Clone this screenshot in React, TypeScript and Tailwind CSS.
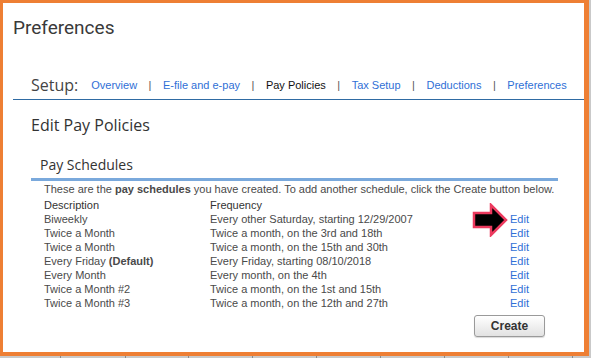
import React from 'react';

const links = [
  { label: 'Overview', active: false },
  { label: 'E-file and e-pay', active: false },
  { label: 'Pay Policies', active: true },
  { label: 'Tax Setup', active: false },
  { label: 'Deductions', active: false },
  { label: 'Preferences', active: false },
];

const schedules: { name: React.ReactNode; freq: string }[] = [
  { name: 'Biweekly', freq: 'Every other Saturday, starting 12/29/2007' },
  { name: 'Twice a Month', freq: 'Twice a month, on the 3rd and 18th' },
  { name: 'Twice a Month', freq: 'Twice a month, on the 15th and 30th' },
  {
    name: (
      <>
        Every Friday <span className="font-bold">(Default)</span>
      </>
    ),
    freq: 'Every Friday, starting 08/10/2018',
  },
  { name: 'Every Month', freq: 'Every month, on the 4th' },
  { name: 'Twice a Month #2', freq: 'Twice a month, on the 1st and 15th' },
  { name: 'Twice a Month #3', freq: 'Twice a month, on the 12th and 27th' },
];

function PointerArrow() {
  return (
    <svg width="36" height="34" viewBox="0 0 36 34" className="absolute left-[-38px] top-[-9px]">
      <path
        d="M2 10 L19 10 L19 2 L34 17 L19 32 L19 24 L2 24 Z"
        fill="#000"
        stroke="#ec3a5e"
        strokeWidth="2.5"
        strokeLinejoin="miter"
      />
    </svg>
  );
}

export default function App() {
  return (
    <div className="w-[591px] h-[358px] bg-[#c9c9c9] overflow-hidden relative">
      <div className="w-[589px] h-[356px] bg-white border-t-[3px] border-l-[3px] border-r-[5px] border-b-[4px] border-[#ee7f34] flex flex-col">
        <h1
          className="ml-[10px] mt-[11px] text-[19px] leading-[28px] text-[#3a3a3a]"
          style={{ fontFamily: 'Roboto, sans-serif' }}
        >
          Preferences
        </h1>

        <div className="ml-[10px] mt-[31px] border-b border-[#2f6ba3] pb-[2px]">
          <div className="flex items-center pl-[18px] h-[24px]">
            <span
              className="text-[16px] text-[#444] mr-[13px]"
              style={{ fontFamily: '"Open Sans", sans-serif' }}
            >
              Setup:
            </span>
            {links.map((l, i) => (
              <span
                key={l.label}
                className="flex items-center text-[11px]"
                style={{ fontFamily: '"Liberation Sans", Arial, sans-serif' }}
              >
                {i > 0 && <span className="text-[#555] mx-[11.5px]">|</span>}
                <span className={l.active ? 'text-[#111]' : 'text-[#2f6fd6]'}>{l.label}</span>
              </span>
            ))}
          </div>
        </div>

        <h2
          className="ml-[28px] mt-[13px] text-[16px] leading-[24px] text-[#333]"
          style={{ fontFamily: '"Open Sans", sans-serif' }}
        >
          Edit Pay Policies
        </h2>

        <div className="ml-[28px] mr-[26px] mt-[18px]">
          <div
            className="pl-[9px] text-[14px] leading-[20px] text-[#333] pb-[3px] border-b-[3px] border-[#7aa9dc]"
            style={{ fontFamily: '"Open Sans", sans-serif' }}
          >
            Pay Schedules
          </div>

          <div
            className="pl-[13px] text-[11px] leading-[14px] text-[#4a4a4a]"
            style={{ fontFamily: '"Liberation Sans", Arial, sans-serif' }}
          >
            <p className="mt-[1px]">
              These are the <span className="font-bold">pay schedules</span> you have created. To add another
              schedule, click the Create button below.
            </p>
            <div className="mt-[2px] flex text-[#333]">
              <span className="w-[166px]">Description</span>
              <span>Frequency</span>
            </div>
            {schedules.map((s, i) => (
              <div key={i} className="flex">
                <span className="w-[166px]">{s.name}</span>
                <span className="w-[300px]">{s.freq}</span>
                <span className="relative text-[#2f6fd6]">
                  {i === 0 && <PointerArrow />}
                  Edit
                </span>
              </div>
            ))}
            <div className="flex justify-end mt-[5px] pr-[13px]">
              <button
                className="w-[71px] h-[22px] rounded-[3px] border border-[#9a9a9a] bg-gradient-to-b from-white to-[#e2e2e2] text-[12px] font-bold text-[#333] shadow-[0_1px_1px_rgba(0,0,0,0.15)]"
                style={{ fontFamily: '"Liberation Sans", Arial, sans-serif' }}
              >
                Create
              </button>
            </div>
          </div>
        </div>
      </div>
      <div className="absolute left-0 bottom-0 w-[591px] h-[2px]">
        {[60, 125, 188, 252, 316, 380, 444, 508, 572].map((x) => (
          <div key={x} className="absolute top-0 w-px h-[2px] bg-[#8a8a8a]" style={{ left: x }} />
        ))}
      </div>
    </div>
  );
}
